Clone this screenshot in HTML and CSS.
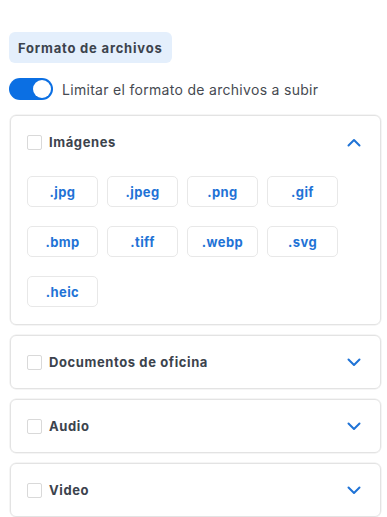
FILE: index.html
```html
<!DOCTYPE html>
<html lang="es">
<head>
<meta charset="utf-8">
<link rel="stylesheet" href="styles.css">
</head>
<body>
<div class="page">
  <div class="section-tag">Formato de archivos</div>
  <label class="switch-row">
    <span class="switch"><span class="knob"></span></span>
    <span class="switch-label">Limitar el formato de archivos a subir</span>
  </label>

  <div class="card open">
    <div class="card-head">
      <span class="check"></span>
      <span class="card-title">Imágenes</span>
      <svg class="chev" width="14" height="9" viewBox="0 0 14 9"><path d="M1.5 7.5 L7 2 L12.5 7.5" fill="none" stroke="#1f73d6" stroke-width="2" stroke-linecap="round" stroke-linejoin="round"/></svg>
    </div>
    <div class="chips">
      <span class="chip">.jpg</span>
      <span class="chip">.jpeg</span>
      <span class="chip">.png</span>
      <span class="chip">.gif</span>
      <span class="chip">.bmp</span>
      <span class="chip">.tiff</span>
      <span class="chip">.webp</span>
      <span class="chip">.svg</span>
      <span class="chip">.heic</span>
    </div>
  </div>

  <div class="card">
    <div class="card-head">
      <span class="check"></span>
      <span class="card-title">Documentos de oficina</span>
      <svg class="chev" width="14" height="9" viewBox="0 0 14 9"><path d="M1.5 1.5 L7 7 L12.5 1.5" fill="none" stroke="#1f73d6" stroke-width="2" stroke-linecap="round" stroke-linejoin="round"/></svg>
    </div>
  </div>

  <div class="card">
    <div class="card-head">
      <span class="check"></span>
      <span class="card-title">Audio</span>
      <svg class="chev" width="14" height="9" viewBox="0 0 14 9"><path d="M1.5 1.5 L7 7 L12.5 1.5" fill="none" stroke="#1f73d6" stroke-width="2" stroke-linecap="round" stroke-linejoin="round"/></svg>
    </div>
  </div>

  <div class="card">
    <div class="card-head">
      <span class="check"></span>
      <span class="card-title">Video</span>
      <svg class="chev" width="14" height="9" viewBox="0 0 14 9"><path d="M1.5 1.5 L7 7 L12.5 1.5" fill="none" stroke="#1f73d6" stroke-width="2" stroke-linecap="round" stroke-linejoin="round"/></svg>
    </div>
  </div>
</div>
</body>
</html>
```
FILE: styles.css
```css
* { box-sizing: border-box; }
html, body { margin: 0; padding: 0; background: #fff; }
body {
  font-family: Inter, "Open Sans", "Liberation Sans", sans-serif;
  color: #3c434d;
}
.page {
  padding: 32px 6px 0 9px;
  display: flex;
  flex-direction: column;
}
.section-tag {
  align-self: flex-start;
  background: #e4effc;
  border-radius: 6px;
  height: 31px;
  padding: 0 9px;
  display: flex;
  align-items: center;
  font-size: 13px;
  font-weight: 700;
  letter-spacing: 0.8px;
  color: #3c434d;
}
.switch-row {
  display: flex;
  align-items: center;
  gap: 9px;
  margin-top: 15px;
  height: 22px;
}
.switch {
  width: 44px;
  height: 22px;
  border-radius: 11px;
  background: #0b6fe3;
  display: flex;
  align-items: center;
  justify-content: flex-end;
  padding: 0 2px;
  flex: none;
}
.knob {
  width: 18px;
  height: 18px;
  border-radius: 50%;
  background: #fff;
}
.switch-label {
  font-size: 14px;
  letter-spacing: 0.3px;
  color: #464a51;
}
.card {
  margin-left: 1px;
  border: 1px solid #e3e3e3;
  border-radius: 6px;
  margin-top: 10px;
  box-shadow: 0 0 0 0.5px #ececec;
}
.switch-row + .card { margin-top: 15px; }
.card-head {
  height: 52px;
  display: flex;
  align-items: center;
  padding: 0 19px 0 16px;
}
.check {
  width: 15px;
  height: 15px;
  border: 1.5px solid #d9d9d9;
  border-radius: 2px;
  flex: none;
}
.card-title {
  margin-left: 7px;
  font-size: 13px;
  font-weight: 700;
  letter-spacing: 0.6px;
  color: #3c434d;
  flex: 1;
}
.chev { flex: none; }
.chips {
  display: grid;
  grid-template-columns: repeat(4, 71px);
  column-gap: 9px;
  row-gap: 19px;
  padding: 8px 16px 17px;
}
.chip {
  height: 31px;
  border: 1.5px solid #e8e8e8;
  border-radius: 5px;
  display: flex;
  align-items: center;
  justify-content: center;
  font-size: 13px;
  font-weight: 700;
  letter-spacing: 0.4px;
  color: #1f73d6;
}
```
